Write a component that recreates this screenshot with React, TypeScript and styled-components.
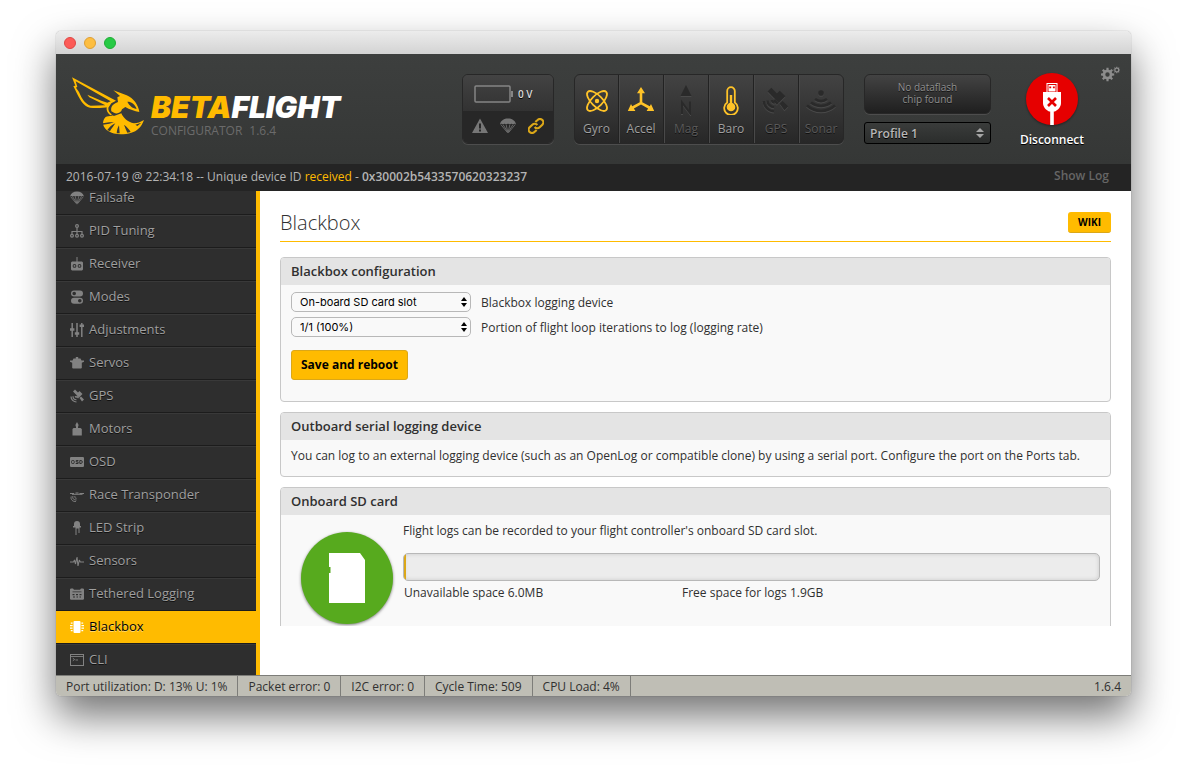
import React, { useLayoutEffect, useRef } from 'react';
import styled, { createGlobalStyle, css } from 'styled-components';

const YELLOW = '#ffbb00';

const GlobalStyle = createGlobalStyle`
  * { box-sizing: border-box; }
  body {
    margin: 0;
    background: #fff;
    font-family: "Open Sans", "Noto Sans", sans-serif;
    font-size: 12px;
    color: #303030;
  }
  h1, h2, p, ul { margin: 0; padding: 0; }
  button, select { font-family: inherit; margin: 0; }
`;

const Desktop = styled.div`
  display: flex;
  height: 100vh;
  min-height: 520px;
  padding: 31px 56px 80px;
`;

const Window = styled.div`
  flex: 1;
  min-width: 0;
  display: flex;
  flex-direction: column;
  overflow: hidden;
  border-radius: 5px;
  background: #fff;
  box-shadow: 0 0 1px rgba(0, 0, 0, 0.5), 0 20px 40px rgba(0, 0, 0, 0.55);
`;

const TitleBar = styled.div`
  flex: none;
  display: flex;
  align-items: center;
  gap: 8px;
  height: 23px;
  padding: 0 8px;
  background: linear-gradient(#ececec, #d3d3d3);
`;

const TrafficLight = styled.button<{ $fill: string; $edge: string }>`
  width: 12px;
  height: 12px;
  padding: 0;
  border: 1px solid ${p => p.$edge};
  border-radius: 50%;
  background: ${p => p.$fill};
`;

const Header = styled.header`
  flex: none;
  display: flex;
  height: 110px;
  padding: 0 11px 0 12px;
  background: linear-gradient(#3d3f3e, #353736);
`;

const Brand = styled.div`
  flex: 1;
  display: flex;
  align-items: flex-start;
  padding-top: 18px;
`;

const BrandText = styled.div`
  padding-top: 19px;
  margin-left: 3px;
  white-space: nowrap;
`;

const BrandName = styled.div`
  font: italic 900 30px/33px Inter, sans-serif;
  font-optical-sizing: none;
  color: #fff;
  span { color: ${YELLOW}; }
`;

const BrandVersion = styled.div`
  display: flex;
  gap: 7px;
  line-height: 14px;
  color: #6b6b6b;
`;

const insetBox = css`
  border: 1px solid #272727;
  border-radius: 6px;
  box-shadow: 0 1px 0 #4d4d4d;
`;

const PowerBox = styled.div`
  ${insetBox}
  width: 92px;
  height: 70px;
  margin: 20px 20px 0 0;
  overflow: hidden;
  background: #434343;
`;

const PowerTop = styled.div`
  display: flex;
  align-items: center;
  gap: 5px;
  height: 36px;
  padding: 2px 0 0 11px;
  background: linear-gradient(#434343, #323232);
  font-size: 10px;
  font-weight: 600;
  color: #ddd;
  text-shadow: 0 1px 0 #000;
`;

const PowerBottom = styled.div`
  display: flex;
  align-items: center;
  justify-content: space-between;
  height: 32px;
  padding: 0 9px 3px;
  background: #272727;
  color: #767676;
`;

const SensorList = styled.ul`
  ${insetBox}
  display: flex;
  height: 70px;
  margin: 20px 20px 0 0;
  overflow: hidden;
  list-style: none;
  background: linear-gradient(#434343, #272727);
`;

const SensorItem = styled.li<{ $on: boolean }>`
  display: flex;
  flex-direction: column;
  align-items: center;
  width: 45px;
  padding-top: 10px;
  line-height: 16px;
  color: ${p => (p.$on ? '#a0a0a0' : '#5a5a5a')};
  text-shadow: 0 1px 0 #111;
  svg {
    flex: none;
    margin-bottom: 6px;
    color: ${p => (p.$on ? '#ffc328' : '#2a2a2a')};
    filter: ${p => (p.$on ? 'none' : 'drop-shadow(0 1px 0 #4a4a4a)')};
  }
  & + & { border-left: 1px solid #222; box-shadow: inset 1px 0 0 #494949; }
  &:first-child { width: 43px; }
`;

const FlashColumn = styled.div`
  display: flex;
  flex-direction: column;
  gap: 8px;
  width: 127px;
  margin: 20px 26px 0 0;
`;

const FlashStatus = styled.div`
  ${insetBox}
  height: 40px;
  padding: 6px 28px 0;
  background: linear-gradient(#434343, #1f1f1f);
  font-size: 10px;
  line-height: 12px;
  text-align: center;
  color: #909090;
  text-shadow: 0 1px 0 #111;
`;

const SelectWrap = styled.span`
  display: grid;
  align-items: center;
  > * { grid-area: 1 / 1; }
  svg { justify-self: end; pointer-events: none; }
`;

const ProfileSelect = styled.select`
  appearance: none;
  width: 100%;
  height: 22px;
  padding: 0 5px;
  border: 1px solid #000;
  border-radius: 3px;
  background: linear-gradient(#3a3c3b, #2b2d2c);
  font-size: 12px;
  font-weight: 600;
  color: #b8b8b8;
  text-shadow: 0 1px 0 #000;
  & + svg { margin-right: 7px; }
`;

const ConnectButton = styled.button`
  display: flex;
  flex-direction: column;
  align-items: center;
  gap: 6px;
  width: 70px;
  height: 76px;
  margin: 18px 14px 0 0;
  padding: 0;
  border: 0;
  background: none;
  font-size: 12px;
  line-height: 16px;
  font-weight: 600;
  color: #fff;
  text-shadow: 0 1px 0 #000;
  svg { flex: none; filter: drop-shadow(0 1px 1px rgba(0, 0, 0, 0.4)); }
`;

const IconButton = styled.button`
  align-self: flex-start;
  display: flex;
  margin-top: 12px;
  padding: 0;
  border: 0;
  background: none;
  color: #8c8c8c;
`;

const LogBar = styled.div`
  flex: none;
  display: flex;
  justify-content: space-between;
  height: 27px;
  padding: 0 22px 0 10px;
  background: #242424;
  line-height: 25px;
  font-weight: 500;
  color: #b4b4b4;
  white-space: nowrap;
  em { font-style: normal; color: ${YELLOW}; }
  b { font-weight: 600; }
`;

const LogToggle = styled.a`
  line-height: 23px;
  font-weight: 600;
  color: #666;
  text-decoration: none;
`;

const Main = styled.div`
  flex: 1;
  min-height: 0;
  display: flex;
`;

const Sidebar = styled.nav`
  flex: none;
  width: 204px;
  overflow-y: auto;
  scrollbar-width: none;
  border-right: 4px solid ${YELLOW};
  background: #2e2e2e;
`;

const NavLink = styled.a<{ $active?: boolean }>`
  display: flex;
  align-items: center;
  gap: 5px;
  height: 33px;
  padding: 0 14px 4px;
  border-top: 1px solid #393939;
  border-bottom: 1px solid #1c1c1c;
  font-size: 13px;
  color: #9f9f9f;
  text-decoration: none;
  text-shadow: 0 1px 0 #111;
  svg { flex: none; margin-top: 2px; color: #828282; }
  ${p =>
    p.$active &&
    css`
      border-top-color: ${YELLOW};
      background: ${YELLOW};
      color: #000;
      text-shadow: 0 1px 0 rgba(255, 255, 255, 0.45);
      svg { color: #fff; }
    `}
`;

const Content = styled.main`
  flex: 1;
  min-width: 0;
  display: flex;
  flex-direction: column;
  padding: 0 20px 49px;
`;

const ContentScroll = styled.div`
  flex: 1;
  min-height: 0;
  overflow-y: auto;
  scrollbar-width: none;
`;

const PageHead = styled.div`
  display: flex;
  justify-content: space-between;
  align-items: flex-start;
  height: 51px;
  padding-top: 21px;
  margin-bottom: 15px;
  border-bottom: 1px solid ${YELLOW};
`;

const PageTitle = styled.h1`
  font-size: 20px;
  line-height: 22px;
  font-weight: 300;
`;

const WikiLink = styled.a`
  display: block;
  padding: 0 10px;
  border-radius: 3px;
  border-bottom: 1px solid #dba718;
  background: ${YELLOW};
  font-size: 10px;
  line-height: 20px;
  font-weight: 700;
  color: #000;
  text-decoration: none;
`;

const Panel = styled.section`
  margin-bottom: 10px;
  border: 1px solid #c8c8c8;
  border-radius: 4px;
  overflow: hidden;
  background: #f9f9f9;
`;

const PanelTitle = styled.h2`
  padding: 0 10px;
  background: #e4e4e4;
  font-size: 13px;
  line-height: 27px;
  font-weight: 600;
`;

const PanelText = styled.p`
  padding: 8px 10px 12px;
  line-height: 16px;
`;

const ConfigForm = styled.form`
  padding: 7px 10px 21px;
`;

const FieldRow = styled.div`
  display: flex;
  align-items: center;
  gap: 10px;
  height: 20px;
  margin-bottom: 5px;
`;

const FieldSelect = styled.select`
  appearance: none;
  width: 180px;
  height: 20px;
  padding: 0 8px;
  border: 1px solid #b8b8b8;
  border-radius: 5px;
  background: #f9f9f9;
  font-family: Inter, sans-serif;
  font-size: 11px;
  color: #000;
  & + svg { margin-right: 4px; }
`;

const SaveButton = styled.button`
  display: block;
  height: 30px;
  margin-top: 13px;
  padding: 0 9px 2px;
  border: 1px solid #dba718;
  border-radius: 3px;
  background: ${YELLOW};
  font-size: 12px;
  font-weight: 700;
  color: #000;
`;

const CardBody = styled.div`
  display: flex;
  gap: 10px;
  padding: 8px 10px 20px;
`;

const CardBadge = styled.div`
  flex: none;
  display: flex;
  align-items: center;
  justify-content: center;
  width: 92px;
  height: 92px;
  margin: 9px 0 0 10px;
  border-radius: 50%;
  background: #57aa1e;
  box-shadow: 0 1px 3px rgba(0, 0, 0, 0.5);
`;

const CardInfo = styled.div`
  flex: 1;
  min-width: 0;
  line-height: 16px;
`;

const SpaceBar = styled.div`
  height: 28px;
  margin: 14px 0 4px;
  overflow: hidden;
  border: 1px solid #b8b8b8;
  border-radius: 5px;
  background: #ececec;
  box-shadow: inset 0 0 4px rgba(0, 0, 0, 0.15);
`;

const SpaceUsed = styled.div`
  height: 100%;
  border-right: 2px solid #dba718;
`;

const SpaceLegend = styled.div`
  display: grid;
  grid-template-columns: 2fr 3fr;
  padding: 0 1px;
`;

const StatusBar = styled.footer`
  flex: none;
  display: flex;
  height: 21px;
  border-top: 1px solid #7d7d79;
  background: #bfbeb5;
  line-height: 21px;
  white-space: nowrap;
`;

const StatusCell = styled.span`
  padding: 0 10px;
  border-right: 1px solid #7d7d79;
  &:last-child { margin-left: auto; border-right: 0; }
`;

const Stroke = ({ size = 14, box = 14, w = 1, children }: any) => (
  <svg width={size} height={size} viewBox={`0 0 ${box} ${box}`} fill="none" stroke="currentColor" strokeWidth={w}>
    {children}
  </svg>
);
const Fill = ({ size = 14, box = 14, children }: any) => (
  <svg width={size} height={size} viewBox={`0 0 ${box} ${box}`} fill="currentColor">
    {children}
  </svg>
);

const Chute = ({ size = 14 }: { size?: number }) => (
  <Fill size={size} box={16}>
    <path d="M0 6.2C1 2.4 4 .6 8 .6s7 1.8 8 5.6c-1-.7-2.2-.7-3 .3-.8-1-2.200-1-3 0-.9-1-3.100-1-4 0-.8-1-2.200-1-3 0-.8-1-2-1-3-.3z" />
    <path d="M.8 6.500 7.300 14.500h1.400l6.500-8M3.200 6.800l4.300 7M12.800 6.800l-4.300 7M6.200 6.800l1.500 7M9.800 6.800l-1.500 7" fill="none" stroke="currentColor" strokeWidth=".8" />
  </Fill>
);

const satelliteShape = (
  <>
    <path d="M6 5 10 1l6 6-4 4zM19 18l3-3 6 6-4 4zM12 11l7-7 6 6-7 7z" />
    <path d="M18 17l-4-4-2 2 4 4z" />
    <path d="M2 15c0 6 5 11 11 11M6 14.500c0 4 3 7 7 7" fill="none" stroke="currentColor" strokeWidth="2.400" />
    <path d="M9.500 14c0 2.500 1.500 4 4 4v-2l-2-2z" />
  </>
);

const navIcons: Record<string, React.ReactNode> = {
  Failsafe: <Chute />,
  'PID Tuning': (
    <Stroke w={1.2}>
      <circle cx="7" cy="2" r="1.400" /><path d="M7 3.400v7M2 10.400V7.500h10v2.900" />
      <circle cx="2" cy="11.800" r="1.400" /><circle cx="7" cy="11.800" r="1.400" /><circle cx="12" cy="11.800" r="1.400" />
    </Stroke>
  ),
  Receiver: (
    <Fill>
      <path fillRule="evenodd" d="M6.500 0h1v4.500H12l1 1v7l-1 1H2l-1-1v-7l1-1h4.500zM4.500 7a1.900 1.900 0 1 0 0 3.800A1.900 1.900 0 0 0 4.500 7zm5 0a1.900 1.900 0 1 0 0 3.800A1.900 1.900 0 0 0 9.500 7z" />
      <circle cx="4.500" cy="8.900" r=".9" /><circle cx="9.500" cy="8.900" r=".9" />
    </Fill>
  ),
  Modes: (
    <Fill>
      <path fillRule="evenodd" d="M4 .5h6a3 3 0 0 1 0 6H4a3 3 0 0 1 0-6zm.2 1.200a1.800 1.800 0 1 0 0 3.600 1.800 1.800 0 0 0 0-3.600zM4 7.700h6a3 3 0 0 1 0 6H4a3 3 0 0 1 0-6zm5.800 1.200a1.800 1.800 0 1 0 0 3.600 1.800 1.800 0 0 0 0-3.600z" />
    </Fill>
  ),
  Adjustments: (
    <Stroke w={1.5}>
      <path d="M2.200 0v14M7 0v14M11.800 0v14" />
      <path d="M0 6.500h4.400M4.800 10.500h4.400M9.600 2.800H14" strokeWidth="2.600" />
    </Stroke>
  ),
  Servos: (
    <Fill>
      <path d="M5.800 1h2.400v1.500h2.300l1 2H14v1.200l-2.200 1v5.300l-.8.500H3l-.8-.5V6.700L0 5.700V4.500h2.500l1-2h2.300z" />
    </Fill>
  ),
  GPS: <Fill box={28}>{satelliteShape}</Fill>,
  Motors: (
    <Fill>
      <path d="M7 0l1.600 3-.6 2v1h2.500l1.300 1v6.500H2.500V7l1-1H6V5l-.6-2z" />
    </Fill>
  ),
  OSD: (
    <Fill>
      <path d="M.8 2h12.400l.8.800v8.400l-.8.800H.8l-.8-.8V2.800z" />
      <g stroke="#2e2e2e" fill="none" strokeWidth="1"><rect x="1.600" y="5.500" width="2.600" height="3" rx=".8" /><path d="M8.400 5.500H6.200v1.400h1.900v1.600H5.700M9.800 5.500v3h1.200l1.200-.8V6.200l-1.200-.7z" /></g>
    </Fill>
  ),
  'Race Transponder': (
    <Stroke>
      <path d="M0 5.500h4M9.500 5.500H14M2 6.300h10.500M5.500 5h3" />
      <path d="M5 8c-.7 1.300.2 2.300 1.500 2.300M3 8c-1 2.500.8 4 3.500 4M1.200 8.500c-.8 3 1.400 5.200 4.800 5.200" />
    </Stroke>
  ),
  'LED Strip': (
    <Fill>
      <path d="M4 5V3a3 3 0 0 1 6 0v2h1v1.500H9.500V12h-1V7.500h-2V14h-1V6.500H3V5z" />
    </Fill>
  ),
  Sensors: (
    <Stroke w={1.1}>
      <path d="M0 8h3.500l1-2 1 4L7 3l1 9L9.300 6l1 2H14" strokeLinejoin="bevel" />
    </Stroke>
  ),
  'Tethered Logging': (
    <Fill>
      <path fillRule="evenodd" d="M.8 1.500H3l1 1.200h6l1-1.200h2.200l.8.700V12l-.8.800H.8L0 12V2.200zM2.500 4.500v.8h9v-.8zM2.500 7v1.200h2V7zm3.500 0v1.200h2V7zm3.500 0v1.200h2V7zM3 9.600v1h2v-1zm3.500 0v1h1.500v-1zm3 0v1H11v-1z" />
    </Fill>
  ),
  Blackbox: (
    <Fill>
      <rect x="3.500" y="1" width="7" height="12" rx="1" />
      <path d="M.8 2.500h1.800v1.200H.8zM0 5h2.600v1.200H0zM0 7.500h2.600v1.200H0zM.8 10h1.800v1.200H.8zM11.400 2.500h1.800v1.200h-1.800zM11.400 5H14v1.200h-2.600zM11.400 7.500H14v1.200h-2.600zM11.400 10h1.800v1.200h-1.800z" />
    </Fill>
  ),
  CLI: (
    <Stroke>
      <rect x=".5" y="1.500" width="13" height="11" /><path d="M.5 3.500h13M2.800 5.200l1.800 1.300-1.800 1.300M5.500 7h2.500" strokeWidth=".9" />
    </Stroke>
  ),
};

const sensors: { name: string; on: boolean; icon: React.ReactNode }[] = [
  {
    name: 'Gyro',
    on: true,
    icon: (
      <Stroke size={30} box={30} w={1.8}>
        <ellipse cx="15" cy="16" rx="13" ry="5.500" transform="rotate(45 15 16)" />
        <ellipse cx="15" cy="16" rx="13" ry="5.500" transform="rotate(-45 15 16)" />
        <circle cx="15" cy="16" r="2.200" fill="currentColor" stroke="none" />
      </Stroke>
    ),
  },
  {
    name: 'Accel',
    on: true,
    icon: (
      <Fill size={30} box={30}>
        <path d="M15 2l4 6.200h-2.700v9.100l7.500 4 1.200-2.200 3.200 6.900h-7.600l1.500-2.600-7.100-3.900-7.100 3.900L9.400 26H1.800L5 19.100l1.200 2.200 7.500-4V8.200H11z" />
      </Fill>
    ),
  },
  {
    name: 'Mag',
    on: false,
    icon: (
      <Stroke size={30} box={30} w={2}>
        <path d="M15 0l5.500 11h-11z" fill="currentColor" stroke="none" />
        <path d="M11 29V17.500l8 10.500V16.500" />
      </Stroke>
    ),
  },
  {
    name: 'Baro',
    on: true,
    icon: (
      <Stroke size={30} box={30} w={1.8}>
        <path d="M11.200 17.500V6a3.800 3.800 0 0 1 7.600 0v11.500a6.800 6.800 0 1 1-7.600 0z" />
        <path d="M15 10v12" strokeWidth="2.400" /><circle cx="15" cy="22" r="4.300" fill="currentColor" stroke="none" />
      </Stroke>
    ),
  },
  { name: 'GPS', on: false, icon: <svg width="30" height="30" viewBox="-1 -2 32 32" fill="currentColor">{satelliteShape}</svg> },
  {
    name: 'Sonar',
    on: false,
    icon: (
      <Stroke size={30} box={30} w={2.6}>
        <circle cx="15" cy="8" r="2.800" fill="currentColor" stroke="none" />
        <path d="M9 14c3.500 2.800 8.500 2.800 12 0M5 17.500c6 4.700 14 4.700 20 0M1 20.500c8 7.300 20 7.300 28 0" />
      </Stroke>
    ),
  },
];

const Wasp = () => (
  <svg width="80" height="68" viewBox="0 0 240 204">
    <g fill={YELLOW}>
      <path
        fillRule="evenodd"
        d="M12 16 144 86 130 94 122 106C104 108 80 109 66 107 46 102 36 84 20 50L16 42 22 41zM23 28 28 44 24 47 33 60C42 82 52 96 68 101L112 100 64 76 58 68 100 86 118 92 128 88z"
      />
      <path d="M136 55 176 70C196 78 212 100 214 120 200 118 184 112 172 105L162 112C160 122 146 128 138 122L130 118C128 106 132 100 142 94L150 90 148 76 156 72z" />
      <path d="M124 98C118 110 122 120 132 127L128 130C116 122 112 108 120 98z" />
      <path d="M112 136C124 128 138 134 148 128L160 124C166 138 178 150 198 154 208 154 218 150 228 144 220 166 206 178 190 182 166 190 136 188 122 178 104 168 100 150 112 136z" />
    </g>
    <g fill="#393b3a">
      <path d="M178 89C188 88 200 96 206 110 196 110 184 102 178 89z" />
      <path d="M104 154 124 151 138 151 124 155 105 158zM118 174C124 166 132 158 142 154 136 164 130 170 126 178zM146 184C147 174 149 166 153 160L155 184zM178 182C174 174 171 166 168 158 176 164 184 172 188 180zM202 158 220 152 208 162z" />
    </g>
  </svg>
);

const Arrows = () => (
  <svg width="6" height="10" viewBox="0 0 6 10" fill="#000">
    <path d="M3 0l3 4H0zM3 10l3-4H0z" />
  </svg>
);

const gear = (cx: number, cy: number, r: number, hole: number, teeth: number) => {
  const pts: string[] = [];
  for (let i = 0; i < teeth; i++) {
    [[-0.3, 0.72], [-0.2, 1], [0.2, 1], [0.3, 0.72]].forEach(([o, k]) => {
      const a = ((i + o) / teeth) * Math.PI * 2;
      pts.push(`${(cx + Math.cos(a) * r * k).toFixed(2)} ${(cy + Math.sin(a) * r * k).toFixed(2)}`);
    });
  }
  return `M${pts.join('L')}ZM${cx - hole} ${cy}a${hole} ${hole} 0 1 0 ${hole * 2} 0a${hole} ${hole} 0 1 0 ${-hole * 2} 0Z`;
};

export default function App() {
  const nav = useRef<HTMLElement>(null);
  useLayoutEffect(() => {
    if (nav.current) nav.current.scrollTop = 9;
  }, []);

  return (
    <>
      <GlobalStyle />
      <Desktop>
        <Window>
          <TitleBar>
            <TrafficLight aria-label="Close" $fill="#fc5b57" $edge="#df4744" />
            <TrafficLight aria-label="Minimize" $fill="#fdbe41" $edge="#de9f34" />
            <TrafficLight aria-label="Zoom" $fill="#27ca45" $edge="#1fad35" />
          </TitleBar>

          <Header>
            <Brand>
              <Wasp />
              <BrandText>
                <BrandName><span>BETA</span>FLIGHT</BrandName>
                <BrandVersion><span>CONFIGURATOR</span><span>1.6.4</span></BrandVersion>
              </BrandText>
            </Brand>

            <PowerBox>
              <PowerTop>
                <svg width="39" height="18" viewBox="0 0 39 18">
                  <rect x="1" y="1" width="35" height="16" rx="1" fill="none" stroke="#858585" strokeWidth="1.500" />
                  <path d="M37 6h2v6h-2z" fill="#858585" />
                </svg>
                0 V
              </PowerTop>
              <PowerBottom>
                <svg width="16" height="16" viewBox="0 0 16 16">
                  <path fill="#767676" fillRule="evenodd" d="M8 .5 16 15H0zM7 5.500v5h2v-5zm0 6v2h2v-2z" />
                </svg>
                <Chute size={16} />
                <svg width="16" height="16" viewBox="0 0 24 24" fill="none" stroke="#dba718" strokeWidth="3.200">
                  <path d="M10 13.500a5 5 0 0 0 7.500.5l4-4a5 5 0 0 0-7.100-7.100L11 6" />
                  <path d="M14 10.500a5 5 0 0 0-7.500-.5l-4 4a5 5 0 0 0 7.100 7.100L13 18" />
                </svg>
              </PowerBottom>
            </PowerBox>

            <SensorList>
              {sensors.map(s => (
                <SensorItem key={s.name} $on={s.on}>{s.icon}{s.name}</SensorItem>
              ))}
            </SensorList>

            <FlashColumn>
              <FlashStatus>No dataflash chip found</FlashStatus>
              <SelectWrap>
                <ProfileSelect aria-label="Profile"><option>Profile 1</option></ProfileSelect>
                <svg width="8" height="12" viewBox="0 0 8 12" fill="#a5a5a5"><path d="M4 1l4 4H0zM4 11l4-4H0z" /></svg>
              </SelectWrap>
            </FlashColumn>

            <ConnectButton>
              <svg width="54" height="54" viewBox="0 0 54 54">
                <circle cx="27" cy="27" r="26" fill="#e60000" />
                <path d="M21.500 11h11v9H36v11c0 4-3 7-6 8.500h-1.200V53h-3.600V39.500H24c-3-1.500-6-4.500-6-8.500V20h3.500z" fill="#fff" />
                <path d="M22.500 12h9v8h-9z" fill="#e60000" /><path d="M23.500 13h7v6.500h-7z" fill="#fff" />
                <path d="M24.300 14.500h1.900v1.800h-1.900zM27.900 14.500h1.900v1.800h-1.900z" fill="#e60000" />
                <path d="M23 26l8 8M31 26l-8 8" stroke="#e60000" strokeWidth="2.600" />
              </svg>
              Disconnect
            </ConnectButton>

            <IconButton aria-label="Options">
              <svg width="19" height="16" viewBox="0 0 19 16" fill="currentColor" fillRule="evenodd">
                <path d={gear(6.5, 8.5, 6.8, 2.2, 8)} />
                <path d={gear(15.8, 4, 3.4, 1.3, 8)} />
              </svg>
            </IconButton>
          </Header>

          <LogBar>
            <span>2016-07-19 @ 22:34:18 -- Unique device ID <em>received</em> - <b>0x30002b5433570620323237</b></span>
            <LogToggle href="#log">Show Log</LogToggle>
          </LogBar>

          <Main>
            <Sidebar ref={nav}>
              {Object.keys(navIcons).map(name => (
                <NavLink key={name} href={`#${name}`} $active={name === 'Blackbox'}>
                  {navIcons[name]}{name}
                </NavLink>
              ))}
            </Sidebar>

            <Content>
              <ContentScroll>
                <PageHead>
                  <PageTitle>Blackbox</PageTitle>
                  <WikiLink href="#wiki">WIKI</WikiLink>
                </PageHead>

                <Panel>
                  <PanelTitle>Blackbox configuration</PanelTitle>
                  <ConfigForm onSubmit={e => e.preventDefault()}>
                    <FieldRow>
                      <SelectWrap>
                        <FieldSelect id="device"><option>On-board SD card slot</option></FieldSelect>
                        <Arrows />
                      </SelectWrap>
                      <label htmlFor="device">Blackbox logging device</label>
                    </FieldRow>
                    <FieldRow>
                      <SelectWrap>
                        <FieldSelect id="rate"><option>1/1 (100%)</option></FieldSelect>
                        <Arrows />
                      </SelectWrap>
                      <label htmlFor="rate">Portion of flight loop iterations to log (logging rate)</label>
                    </FieldRow>
                    <SaveButton>Save and reboot</SaveButton>
                  </ConfigForm>
                </Panel>

                <Panel>
                  <PanelTitle>Outboard serial logging device</PanelTitle>
                  <PanelText>
                    You can log to an external logging device (such as an OpenLog or compatible clone) by using a serial port. Configure the port on the Ports tab.
                  </PanelText>
                </Panel>

                <Panel>
                  <PanelTitle>Onboard SD card</PanelTitle>
                  <CardBody>
                    <CardBadge>
                      <svg width="36" height="50" viewBox="0 0 36 50">
                        <path d="M0 0h31l5 7v43H0V20h1.500v-6H0z" fill="#fff" />
                      </svg>
                    </CardBadge>
                    <CardInfo>
                      <p>Flight logs can be recorded to your flight controller's onboard SD card slot.</p>
                      <SpaceBar><SpaceUsed style={{ width: `${(6 / 1946) * 100}%` }} /></SpaceBar>
                      <SpaceLegend>
                        <span>Unavailable space 6.0MB</span>
                        <span>Free space for logs 1.9GB</span>
                      </SpaceLegend>
                    </CardInfo>
                  </CardBody>
                </Panel>
              </ContentScroll>
            </Content>
          </Main>

          <StatusBar>
            <StatusCell>Port utilization: D: 13% U: 1%</StatusCell>
            <StatusCell>Packet error: 0</StatusCell>
            <StatusCell>I2C error: 0</StatusCell>
            <StatusCell>Cycle Time: 509</StatusCell>
            <StatusCell>CPU Load: 4%</StatusCell>
            <StatusCell>1.6.4</StatusCell>
          </StatusBar>
        </Window>
      </Desktop>
    </>
  );
}
